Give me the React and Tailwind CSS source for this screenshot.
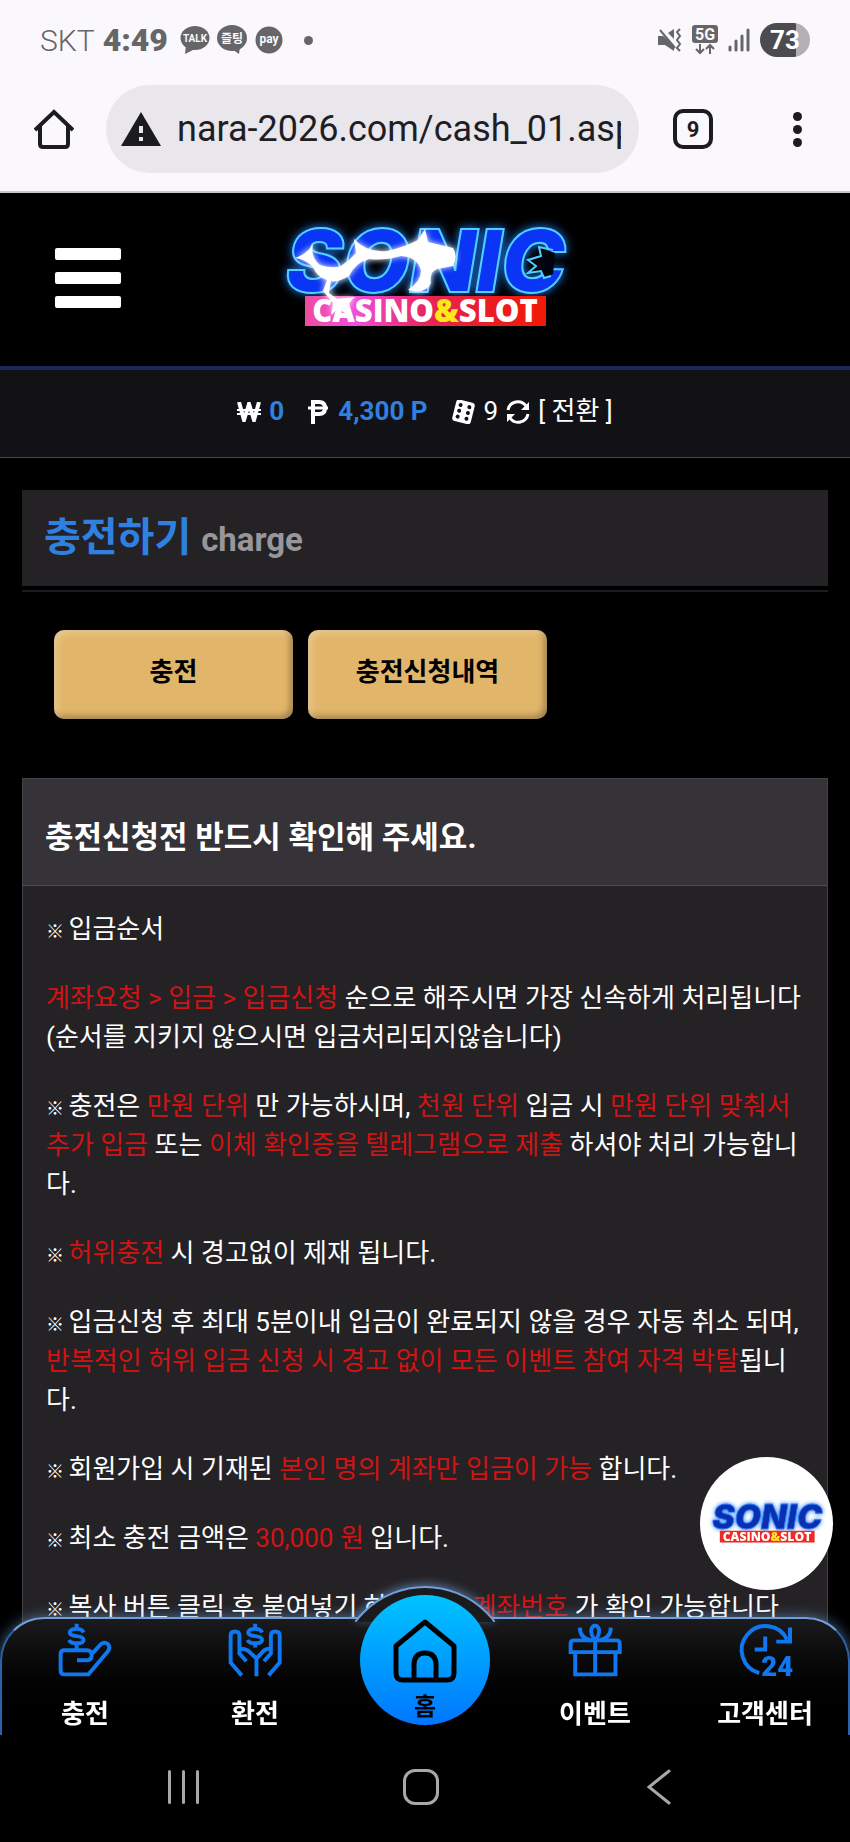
import {clsx} from "clsx";

const NOTICES = [
    [{text: "입금순서", mark: true}],
    [
        {text: "계좌요청 > 입금 > 입금신청", red: true},
        {text: " 순으로 해주시면 가장 신속하게 처리됩니다"},
        {br: true},
        {text: "(순서를 지키지 않으시면 입금처리되지않습니다)"},
    ],
    [
        {text: "충전은 ", mark: true},
        {text: "만원 단위", red: true},
        {text: " 만 가능하시며, "},
        {text: "천원 단위", red: true},
        {text: " 입금 시 "},
        {text: "만원 단위 맞춰서 추가 입금", red: true},
        {text: " 또는 "},
        {text: "이체 확인증을 텔레그램으로 제출", red: true},
        {text: " 하셔야 처리 가능합니다."},
    ],
    [
        {text: "", mark: true},
        {text: "허위충전", red: true},
        {text: " 시 경고없이 제재 됩니다."},
    ],
    [
        {text: "입금신청 후 최대 5분이내 입금이 완료되지 않을 경우 자동 취소 되며, ", mark: true},
        {text: "반복적인 허위 입금 신청 시 경고 없이 모든 이벤트 참여 자격 박탈", red: true},
        {text: "됩니다."},
    ],
    [
        {text: "회원가입 시 기재된 ", mark: true},
        {text: "본인 명의 계좌만 입금이 가능", red: true},
        {text: " 합니다."},
    ],
    [
        {text: "최소 충전 금액은 ", mark: true},
        {text: "30,000 원", red: true},
        {text: " 입니다."},
    ],
    [
        {text: "복사 버튼 클릭 후 붙여넣기 하시면 꼭 ", mark: true},
        {text: "계좌번호", red: true},
        {text: " 가 확인 가능합니다"},
    ],
];

const Logo = ({className, flash}) => (
    <svg viewBox="0 0 300 110" className={clsx("overflow-visible", className)} role="img" aria-label="SONIC CASINO&SLOT">
        <defs>
            <linearGradient id="logoBar" x1="0" x2="1">
                <stop offset="0" stopColor="#ee4ba0" />
                <stop offset="0.2" stopColor="#f04fe0" />
                <stop offset="0.5" stopColor="#e8245c" />
                <stop offset="0.8" stopColor="#ec1c1c" />
                <stop offset="1" stopColor="#f01a08" />
            </linearGradient>
        </defs>
        <text
            x="11"
            y="69"
            fill={flash ? "#0b35f5" : "#0a2fb0"}
            stroke={flash ? "#4fd0ff" : "#2f7df5"}
            strokeWidth="2"
            fontFamily="Inter, sans-serif"
            fontWeight="900"
            fontStyle="italic"
            fontSize="86"
            className="drop-shadow-[0_0_5px_#1d7cff]"
        >
            SONIC
        </text>
        {flash && (
            <>
                <path d="M280 30 L264 24 L266 33 L253 37 L261 43 L253 50 L266 48 L269 55 L278 51" fill="#02030f" />
                <path d="M278 27 L264 24 L266 33 L253 37 L261 43 L253 50 L266 48 L269 55 L276 53" fill="none" stroke="#4fd0ff" strokeWidth="2" />
            </>
        )}
        <rect x="30" y="73" width="241" height="30" fill={flash ? "url(#logoBar)" : "#ee2a24"} />
        <text
            x="150"
            y="99"
            textAnchor="middle"
            fill="#fff"
            fontFamily="'Open Sans', sans-serif"
            fontWeight="800"
            fontSize="31"
        >
            CASINO<tspan fill="#ffe81a">&amp;</tspan>SLOT
        </text>
        {flash && (
            <path
                d="M20 35 Q32 31 38 21 Q35 34 45 42 Q58 46 66 43 Q74 38 81 30 L79 16 Q92 30 112 28 Q130 24 143 17 L150 6 L153 19 L178 25 Q183 33 178 43 L162 46 Q153 50 156 60 Q150 72 133 67 Q146 58 146 48 Q143 34 126 33 Q108 38 94 36 Q80 40 74 53 Q62 60 56 58 L54 70 L62 76 L80 74 Q70 82 72 92 L64 85 L56 92 L58 80 L48 68 L52 57 Q42 54 38 44 Q30 36 20 35 Z"
                fill="#fff"
                className="drop-shadow-[0_0_3px_#ffffff]"
            />
        )}
    </svg>
);

const StatusBar = () => (
    <div className="flex h-20 items-center justify-between px-10 text-[#666568]">
        <div className="flex items-center">
            <span className="text-[30px] font-light">SKT</span>
            <span className="ml-2 text-[32px] font-black">4:49</span>
            <svg viewBox="0 0 104 30" className="ml-3 h-[30px] w-[104px]" fill="currentColor">
                <ellipse cx="15" cy="13" rx="14.5" ry="12" />
                <path d="M6 20 L5 29 L15 24 Z" />
                <ellipse cx="52" cy="13" rx="15" ry="13" />
                <path d="M52 24 L59 29 L60 22 Z" />
                <circle cx="89" cy="15" r="13.5" />
                <g fill="#faf8fd" textAnchor="middle" fontFamily="Roboto, 'Noto Sans CJK KR', sans-serif" fontWeight="700">
                    <text x="15" y="17" fontSize="10">TALK</text>
                    <text x="52" y="18" fontSize="12">즐팅</text>
                    <text x="89" y="18" fontSize="12">pay</text>
                </g>
            </svg>
            <span className="ml-5 size-[9px] rounded-full bg-current" />
        </div>
        <div className="flex items-center gap-[10px]">
            <svg viewBox="0 0 24 24" className="size-6" fill="none" stroke="currentColor" strokeWidth="2">
                <path d="M0 8 H5 L16 17 V23 L7 17 H0 Z" fill="currentColor" stroke="none" />
                <path d="M10 5 L16 1 V11 Z" fill="currentColor" stroke="none" />
                <path d="M2 2 L17 20" />
                <path d="M22 1 L19 4 L22 8 L19 12 L22 16 L19 20 L22 23" />
            </svg>
            <svg viewBox="0 0 26 30" className="h-[30px] w-[26px]" fill="none" stroke="currentColor" strokeWidth="2">
                <rect x="0" y="0" width="26" height="18" rx="3" fill="currentColor" stroke="none" />
                <text x="13" y="15" textAnchor="middle" fill="#faf8fd" stroke="none" fontFamily="Roboto, sans-serif" fontWeight="700" fontSize="16">5G</text>
                <path d="M8 19 V28 M4 24 L8 28 L12 24 M18 29 V20 M14 24 L18 20 L22 24" />
            </svg>
            <svg viewBox="0 0 22 24" className="h-6 w-[22px]" stroke="currentColor" strokeWidth="3" strokeLinecap="round">
                <path d="M2 19 V22 M8 13 V22 M14 8 V22 M20 2 V22" />
            </svg>
            <span className="flex h-[34px] w-[50px] items-center justify-center rounded-full bg-linear-to-r from-[#4c4b4e] from-72% to-[#b2b0b4] to-72% text-[26px] font-bold text-white">
                73
            </span>
        </div>
    </div>
);

const BrowserBar = () => (
    <div className="flex items-center pt-[5px] pr-12 pb-[18px] pl-[34px]">
        <button type="button" aria-label="Home">
            <svg viewBox="0 0 40 40" className="size-10" fill="none" stroke="#1c1b20" strokeWidth="4" strokeLinejoin="round">
                <path d="M1 21 L20 3 L39 21" strokeLinejoin="miter" />
                <path d="M6 17 V35 Q6 38 9 38 H31 Q34 38 34 35 V17" />
            </svg>
        </button>
        <label className="ml-8 flex h-22 flex-1 items-center rounded-full bg-[#e9e7ec] pr-[18px] pl-[15px]">
            <svg viewBox="0 0 40 34" className="mr-4 h-[34px] w-10 shrink-0">
                <path d="M20 0 L40 34 H0 Z" fill="#1c1b20" />
                <path d="M20 14 V21 M20 25 V29" stroke="#e9e7ec" strokeWidth="4" />
            </svg>
            <input
                type="text"
                readOnly
                aria-label="URL"
                value="nara-2026.com/cash_01.asp"
                className="w-0 flex-1 bg-transparent text-[36px] text-[#1f1e24] outline-none"
            />
        </label>
        <button type="button" aria-label="Tabs" className="ml-[34px] flex size-10 items-center justify-center rounded-[10px] border-4 border-[#1c1b20] text-[22px] font-bold text-[#1c1b20]">
            9
        </button>
        <button type="button" aria-label="Menu" className="ml-20 flex flex-col gap-1">
            <span className="size-[9px] rounded-full bg-[#1c1b20]" />
            <span className="size-[9px] rounded-full bg-[#1c1b20]" />
            <span className="size-[9px] rounded-full bg-[#1c1b20]" />
        </button>
    </div>
);

const SiteHeader = () => (
    <header className="grid h-[177px] grid-cols-[1fr_auto_1fr] items-center border-b-4 border-[#1c2857] bg-black px-[55px] pb-1">
        <button type="button" aria-label="메뉴" className="flex w-[66px] flex-col gap-3">
            <span className="h-3 rounded-xs bg-white" />
            <span className="h-3 rounded-xs bg-white" />
            <span className="h-3 rounded-xs bg-white" />
        </button>
        <Logo flash className="h-[110px] w-[300px]" />
    </header>
);

const Balance = () => (
    <div className="flex h-22 items-center justify-center border-b border-[#48474b] bg-[#121115] pb-1 text-[26px] text-white">
        <svg viewBox="0 0 24 20" className="h-5 w-6" fill="none" stroke="currentColor">
            <path d="M2 0 L7 18 L12 2 L17 18 L22 0" strokeWidth="4" />
            <path d="M0 8 H24 M0 12 H24" strokeWidth="2" />
        </svg>
        <strong className="ml-2 font-bold text-[#2f80e0]">0</strong>
        <svg viewBox="0 0 20 24" className="ml-6 h-6 w-5" fill="none" stroke="currentColor">
            <path d="M5 24 V2 H11 Q17 2 17 8 Q17 14 11 14 H5" strokeWidth="4" />
            <path d="M0 8 H20" strokeWidth="3" />
        </svg>
        <strong className="ml-[10px] font-bold text-[#2f80e0]">4,300 P</strong>
        <svg viewBox="0 0 24 24" className="ml-6 size-6">
            <g transform="rotate(14 12 12)">
                <rect x="2" y="1" width="19" height="22" rx="3" fill="#fff" />
                <g fill="#121115">
                    <circle cx="7" cy="6" r="2" />
                    <circle cx="7" cy="12" r="2" />
                    <circle cx="7" cy="18" r="2" />
                    <circle cx="16" cy="6" r="2" />
                    <circle cx="16" cy="12" r="2" />
                    <circle cx="16" cy="18" r="2" />
                </g>
            </g>
        </svg>
        <span className="ml-2">9</span>
        <button type="button" className="ml-2 flex items-center gap-2">
            <svg viewBox="0 0 24 24" className="size-6" fill="none" stroke="currentColor" strokeWidth="3">
                <path d="M2 10 A10 10 0 0 1 20 6 M22 14 A10 10 0 0 1 4 18" />
                <path d="M23 2 V10 H15 Z M1 22 V14 H9 Z" fill="currentColor" stroke="none" />
            </svg>
            [ 전환 ]
        </button>
    </div>
);

const TabButton = ({children}) => (
    <button
        type="button"
        className="h-[89px] w-[239px] rounded-[10px] bg-[#e2b66a] pb-1 text-[26px] font-bold text-black shadow-[inset_3px_3px_6px_rgba(255,255,255,0.3),inset_-3px_-3px_6px_rgba(0,0,0,0.3)]"
    >
        {children}
    </button>
);

const NoticePanel = () => (
    <section className="mx-[22px] mt-[59px] flex-1 border border-[#434246] bg-[#242225] text-white">
        <h2 className="border-b border-[#4b4a4e] bg-[#353337] px-[22px] pt-9 pb-6 text-[31px] leading-[46px] font-bold">
            충전신청전 반드시 확인해 주세요.
        </h2>
        <div className="flex flex-col gap-[30px] pt-6 pr-5 pl-[23px] text-[26px] leading-[39px]">
            {NOTICES.map((parts, i) => (
                <p key={i}>
                    {parts.map((part, j) =>
                        part.br ? (
                            <br key={j} />
                        ) : (
                            <span key={j} className={clsx(part.red && "text-[#d01414]")}>
                                {part.mark && <span className="text-[18px] leading-none font-bold">※ </span>}
                                {part.text}
                            </span>
                        )
                    )}
                </p>
            ))}
        </div>
    </section>
);

const ChargeIcon = () => (
    <svg viewBox="172 129 165 165" className="size-[54px]" fill="none" stroke="#0f78f0" strokeWidth="12">
        <path d="M230 243 H256 Q275 243 275 228 Q275 212 260 212 H192 Q180 212 180 224 V274 Q180 286 192 286 H265 L324 216 Q333 204 325 194 Q314 185 303 194 L275 224" />
        <path d="M250 158 Q246 147 229 147 Q208 147 208 158 Q208 167 229 169 Q250 171 250 181 Q250 191 229 191 Q210 191 206 181 M229 131 V147 M229 191 V210" />
    </svg>
);

const ExchangeIcon = () => (
    <svg viewBox="682 129 165 165" className="size-[54px]" fill="none" stroke="#0f78f0" strokeWidth="12">
        <path d="M724 289 L690 250 V168 Q690 155 703 155 Q717 155 717 168 V222 L738 246 M806 289 L840 250 V168 Q840 155 827 155 Q813 155 813 168 V222 L792 246" />
        <path d="M769 292 V238 L744 214 Q732 207 717 208 M769 238 L789 216 Q798 207 813 208" />
        <path d="M786 158 Q782 147 765 147 Q744 147 744 158 Q744 167 765 169 Q786 171 786 181 Q786 191 765 191 Q746 191 742 181 M765 131 V147 M765 191 V204" />
    </svg>
);

const GiftIcon = () => (
    <svg viewBox="427 129 165 165" className="size-[54px]" fill="none" stroke="#0f78f0" strokeWidth="12">
        <path d="M435 218 V192 Q435 182 445 182 H575 Q585 182 585 192 V218 Z M449 218 V286 H572 V218 M510 182 V286" />
        <path d="M510 182 Q496 165 498 150 Q501 137 510 137 Q519 137 522 150 Q524 165 510 182 M463 143 Q464 176 498 182 M558 143 Q557 176 522 182" />
    </svg>
);

const SupportIcon = () => (
    <svg viewBox="937 129 165 165" className="size-[54px] overflow-visible" fill="none" stroke="#0f78f0" strokeWidth="12">
        <path d="M1002 282 A73 73 0 1 1 1087 180" />
        <path d="M1096 143 V186 H1054 M1020 170 V210 H988" />
        <text x="1057" y="291" textAnchor="middle" fill="#0f78f0" stroke="none" fontFamily="Roboto, sans-serif" fontWeight="900" fontSize="84">24</text>
    </svg>
);

const MENU = [
    {label: "충전", Icon: ChargeIcon},
    {label: "환전", Icon: ExchangeIcon},
    {label: "홈", home: true},
    {label: "이벤트", Icon: GiftIcon},
    {label: "고객센터", Icon: SupportIcon},
];

const BottomMenu = () => (
    <nav className="relative h-[118px] rounded-t-[44px] border-x-2 border-t-2 border-x-[#2c62a8] border-t-[#6f9fd8] bg-linear-to-b from-[#1b1b1d] to-black shadow-[0_0_14px_rgba(120,175,240,0.55)]">
        {/* hump behind the home button */}
        <div className="absolute -top-[33px] left-1/2 h-9 w-[140px] -translate-x-1/2 overflow-hidden drop-shadow-[0_-2px_5px_rgba(120,175,240,0.55)]">
            <div className="mx-[-18px] size-44 rounded-full border-2 border-[#6f9fd8] bg-[#1b1b1d]" />
        </div>
        <ul className="-mx-[2px] grid h-full grid-cols-5 text-[26px] font-bold text-white">
            {MENU.map(({label, Icon, home}) => (
                <li key={label} className="relative flex justify-center">
                    {home ? (
                        <a href="#home" className="absolute -top-6 flex size-[130px] flex-col items-center rounded-full bg-linear-to-b from-[#00c3ff] to-[#0075ff] pt-6 text-[24px] leading-6 text-black">
                            <svg viewBox="0 0 64 64" className="mb-3 size-16" fill="none" stroke="#000" strokeWidth="5" strokeLinejoin="round">
                                <path d="M32 3 L61 27 V54 Q61 61 54 61 H10 Q3 61 3 54 V27 Z" />
                                <path d="M21 61 V46 Q21 34 32 34 Q43 34 43 46 V61" />
                            </svg>
                            {label}
                        </a>
                    ) : (
                        <a href={"#" + label} className="flex flex-col items-center gap-[18px] pt-1 leading-[38px]">
                            <Icon />
                            {label}
                        </a>
                    )}
                </li>
            ))}
        </ul>
    </nav>
);

const SystemNav = () => (
    <div className="relative grid h-[107px] grid-cols-3 place-items-center bg-black pr-[72px] pb-1 pl-16">
        <button type="button" aria-label="Recents" className="flex h-[34px] gap-[11px]">
            <span className="w-[3px] rounded-full bg-[#a9a7ab]" />
            <span className="w-[3px] rounded-full bg-[#a9a7ab]" />
            <span className="w-[3px] rounded-full bg-[#a9a7ab]" />
        </button>
        <button type="button" aria-label="Home" className="size-9 rounded-xl border-3 border-[#a9a7ab]" />
        <button type="button" aria-label="Back">
            <svg viewBox="0 0 24 36" className="h-9 w-6" fill="none" stroke="#a9a7ab" strokeWidth="3" strokeLinecap="round">
                <path d="M22 2 L2 18 L22 34" />
            </svg>
        </button>
    </div>
);

const App = () => {
    return (
        <div className="flex min-h-screen flex-col bg-black font-[Roboto,'Noto_Sans_CJK_KR',sans-serif]">
            <div className="border-b-2 border-[#c9c7cb] bg-[#faf8fd]">
                <StatusBar />
                <BrowserBar />
            </div>
            <SiteHeader />
            <Balance />
            <main className="flex flex-1 flex-col pt-8">
                <div className="mx-[22px] border-b-2 border-[#1c1b1e] pb-1">
                    <h1 className="bg-[#242225] px-[22px] text-[40px] leading-[96px] font-bold text-[#2f80e0]">
                        충전하기 <small className="text-[33px] leading-none text-[#99969b]">charge</small>
                    </h1>
                </div>
                <div className="mx-[54px] mt-[38px] flex gap-[15px]">
                    <TabButton>충전</TabButton>
                    <TabButton>충전신청내역</TabButton>
                </div>
                <NoticePanel />
            </main>
            <div className="fixed inset-x-0 bottom-0">
                <a href="#top" className="absolute -top-40 right-[17px] flex size-[133px] items-center justify-center rounded-full bg-white">
                    <Logo className="w-[118px]" />
                </a>
                <BottomMenu />
                <SystemNav />
            </div>
        </div>
    );
};

export default App;
